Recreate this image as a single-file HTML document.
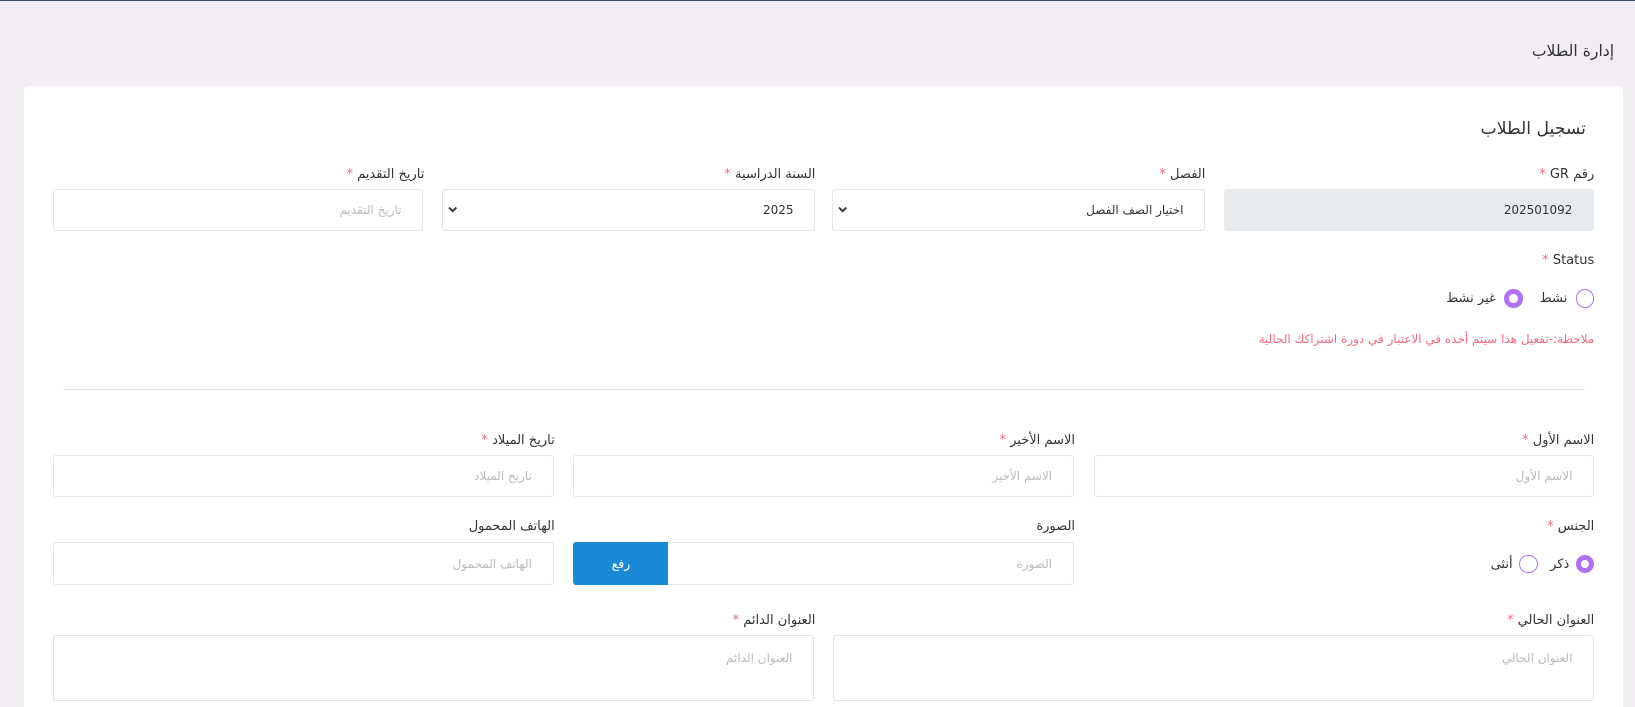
<!DOCTYPE html>
<html><head><meta charset="utf-8"><style>
html,body{margin:0;padding:0;width:1635px;height:707px;overflow:hidden;background:#f1edf3}
#w{zoom:1.0427;position:relative;width:1568px;height:678px;font-family:"DejaVu Sans",sans-serif;color:#333;direction:rtl}
.a{position:absolute}
.top{left:0;top:0;width:1568px;height:1px;background:#3c4a6a}
.card{left:23px;top:82px;width:1534px;height:620px;background:#fff;border-radius:5px}
.lbl{font-size:12.5px;white-space:nowrap;text-align:right}
.lbl i{color:#f06b7c;font-style:normal}
.inp{border:1px solid #e4e4ea;border-radius:3px;background:#fff;box-sizing:border-box;font-size:11.5px;color:#bbb;padding:0 20px;display:flex;align-items:center}
.sel{color:#333}
.chev{position:absolute;left:5px;top:16px}
.radio{width:18px;height:18px;border-radius:50%;border:1.5px solid #b071f0;box-sizing:border-box;display:inline-block}
.on{background:#fff;border:5px solid #b071f0}
</style></head><body><div id="w">
<div class="a top"></div>
<div class="a" style="right:20px;top:39px;font-size:15px;color:#333">إدارة الطلاب</div>
<div class="a card"></div>
<div class="a" style="right:47px;top:114px;font-size:16.5px;color:#333">تسجيل الطلاب</div>

<div class="a lbl" style="right:39px;top:160px">رقم GR <i>*</i></div>
<div class="a inp" style="left:1174px;top:181px;width:355px;height:41px;background:#e8ebee;border-color:#e8ebee;color:#333;justify-content:flex-start">202501092</div>
<div class="a lbl" style="right:412px;top:160px">الفصل <i>*</i></div>
<div class="a inp sel" style="left:798px;top:181px;width:358px;height:41px">اختيار الصف الفصل<svg class="chev" width="9" height="7" viewBox="0 0 9 7"><path d="M1 1.5L4.5 5L8 1.5" stroke="#333" stroke-width="1.8" fill="none"/></svg></div>
<div class="a lbl" style="right:786px;top:160px">السنة الدراسية <i>*</i></div>
<div class="a inp sel" style="left:424px;top:181px;width:358px;height:41px">2025<svg class="chev" width="9" height="7" viewBox="0 0 9 7"><path d="M1 1.5L4.5 5L8 1.5" stroke="#333" stroke-width="1.8" fill="none"/></svg></div>
<div class="a lbl" style="right:1161px;top:160px">تاريخ التقديم <i>*</i></div>
<div class="a inp" style="left:51px;top:181px;width:355px;height:41px">تاريخ التقديم</div>

<div class="a lbl" style="right:39px;top:243px">Status <i>*</i></div>
<div class="a" style="right:39px;top:277px;font-size:12.5px;display:flex;align-items:center;gap:8px"><span class="radio"></span><span>نشط</span><span class="radio on" style="margin-right:8px"></span><span>غير نشط</span></div>
<div class="a" style="right:39px;top:318px;font-size:11.5px;color:#f06b7c">ملاحظة:-تفعيل هذا سيتم أخذه في الاعتبار في دورة اشتراكك الحالية</div>
<div class="a" style="left:60px;top:373px;width:1460px;height:1px;background:#e2e2e6"></div>

<div class="a lbl" style="right:39px;top:415px">الاسم الأول <i>*</i></div>
<div class="a inp" style="left:1049px;top:436px;width:480px;height:41px">الاسم الأول</div>
<div class="a lbl" style="right:537px;top:415px">الاسم الأخير <i>*</i></div>
<div class="a inp" style="left:550px;top:436px;width:480px;height:41px">الاسم الأخير</div>
<div class="a lbl" style="right:1036px;top:415px">تاريخ الميلاد <i>*</i></div>
<div class="a inp" style="left:51px;top:436px;width:480px;height:41px">تاريخ الميلاد</div>

<div class="a lbl" style="right:39px;top:498px">الجنس <i>*</i></div>
<div class="a" style="right:39px;top:532px;font-size:12.5px;display:flex;align-items:center;gap:6px"><span class="radio on"></span><span>ذكر</span><span class="radio" style="margin-right:6px"></span><span>أنثى</span></div>
<div class="a lbl" style="right:537px;top:498px">الصورة</div>
<div class="a inp" style="left:550px;top:520px;width:480px;height:41px">الصورة</div>
<div class="a" style="left:550px;top:520px;width:91px;height:41px;background:#1a8ad6;border-radius:3px 0 0 3px;color:#fff;font-size:12px;display:flex;align-items:center;justify-content:center">رفع</div>
<div class="a lbl" style="right:1036px;top:498px">الهاتف المحمول</div>
<div class="a inp" style="left:51px;top:520px;width:480px;height:41px">الهاتف المحمول</div>

<div class="a lbl" style="right:39px;top:588px">العنوان الحالي <i>*</i></div>
<div class="a inp" style="left:799px;top:609px;width:730px;height:63px;align-items:flex-start;padding-top:14px">العنوان الحالي</div>
<div class="a lbl" style="right:786px;top:588px">العنوان الدائم <i>*</i></div>
<div class="a inp" style="left:51px;top:609px;width:730px;height:63px;align-items:flex-start;padding-top:14px">العنوان الدائم</div>
</div></body></html>
